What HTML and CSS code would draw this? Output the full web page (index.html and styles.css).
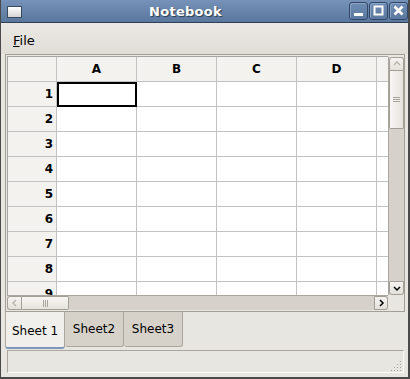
FILE: index.html
```html
<!DOCTYPE html>
<html>
<head>
<meta charset="utf-8">
<link rel="stylesheet" href="styles.css">
</head>
<body>
<div class="window">
  <div class="titlebar">
    <div class="winicon"></div>
    <div class="title">Notebook</div>
    <div class="tbtns">
      <div class="tbtn"><svg width="19" height="18" viewBox="0 0 19 18"><rect x="5" y="11" width="9" height="3" fill="#fff"/></svg></div>
      <div class="tbtn"><svg width="19" height="18" viewBox="0 0 19 18"><rect x="5.5" y="4.5" width="8" height="8" fill="none" stroke="#fff" stroke-width="2"/></svg></div>
      <div class="tbtn"><svg width="19" height="18" viewBox="0 0 19 18"><path d="M5.5 4.5 L13.5 12.5 M13.5 4.5 L5.5 12.5" stroke="#fff" stroke-width="2.6"/></svg></div>
    </div>
  </div>
  <div class="menubar"><span class="menuitem"><u>F</u>ile</span></div>
  <div class="frame">
    <div class="leftcol">
      <div class="viewport">
        <div class="grid">
          <div class="hd corner"></div><div class="hd col">A</div><div class="hd col">B</div><div class="hd col">C</div><div class="hd col">D</div><div class="hd col"></div>
          <div class="hd row">1</div><div class="cell sel"></div><div class="cell"></div><div class="cell"></div><div class="cell"></div><div class="cell"></div>
          <div class="hd row">2</div><div class="cell"></div><div class="cell"></div><div class="cell"></div><div class="cell"></div><div class="cell"></div>
          <div class="hd row">3</div><div class="cell"></div><div class="cell"></div><div class="cell"></div><div class="cell"></div><div class="cell"></div>
          <div class="hd row">4</div><div class="cell"></div><div class="cell"></div><div class="cell"></div><div class="cell"></div><div class="cell"></div>
          <div class="hd row">5</div><div class="cell"></div><div class="cell"></div><div class="cell"></div><div class="cell"></div><div class="cell"></div>
          <div class="hd row">6</div><div class="cell"></div><div class="cell"></div><div class="cell"></div><div class="cell"></div><div class="cell"></div>
          <div class="hd row">7</div><div class="cell"></div><div class="cell"></div><div class="cell"></div><div class="cell"></div><div class="cell"></div>
          <div class="hd row">8</div><div class="cell"></div><div class="cell"></div><div class="cell"></div><div class="cell"></div><div class="cell"></div>
          <div class="hd row">9</div><div class="cell"></div><div class="cell"></div><div class="cell"></div><div class="cell"></div><div class="cell"></div>
        </div>
      </div>
      <div class="hscroll">
        <div class="sbtn hleft"><svg width="8" height="8" viewBox="0 0 8 8"><path d="M5 1 L2 4 L5 7" fill="none" stroke="#b5b2ab" stroke-width="1.3"/></svg></div>
        <div class="hthumb"><span></span><span></span><span></span></div>
        <div class="htrough"></div>
        <div class="sbtn hright"><svg width="8" height="8" viewBox="0 0 8 8"><path d="M3 1 L6 4 L3 7" fill="none" stroke="#000" stroke-width="1.5"/></svg></div>
      </div>
    </div>
    <div class="rightcol">
      <div class="vscroll">
        <div class="sbtn vup"><svg width="8" height="8" viewBox="0 0 8 8"><path d="M1 5 L4 2 L7 5" fill="none" stroke="#b5b2ab" stroke-width="1.3"/></svg></div>
        <div class="vthumb"><span></span><span></span><span></span></div>
        <div class="vtrough"></div>
        <div class="sbtn vdown"><svg width="8" height="8" viewBox="0 0 8 8"><path d="M1 3 L4 6 L7 3" fill="none" stroke="#000" stroke-width="1.5"/></svg></div>
      </div>
      <div class="sbcorner"></div>
    </div>
  </div>
  <div class="tabs">
    <div class="tab active">Sheet 1</div>
    <div class="tab">Sheet2</div>
    <div class="tab">Sheet3</div>
  </div>
  <div class="statusbar">
    <svg class="grip" width="12" height="12" viewBox="0 0 12 12">
      <g fill="#a8a49c">
        <rect x="10" y="1" width="1" height="1"/>
        <rect x="7" y="4" width="1" height="1"/><rect x="10" y="4" width="1" height="1"/>
        <rect x="4" y="7" width="1" height="1"/><rect x="7" y="7" width="1" height="1"/><rect x="10" y="7" width="1" height="1"/>
        <rect x="1" y="10" width="1" height="1"/><rect x="4" y="10" width="1" height="1"/><rect x="7" y="10" width="1" height="1"/><rect x="10" y="10" width="1" height="1"/>
      </g>
    </svg>
  </div>
</div>
</body>
</html>
```

FILE: styles.css
```css
html, body {
  margin: 0;
  padding: 0;
  background: #e8e6e1;
}
.window {
  width: 410px;
  height: 379px;
  box-sizing: border-box;
  border-left: 1px solid #4a4a4a;
  border-right: 2px solid #4a4a4a;
  border-bottom: 2px solid #4a4a4a;
  background: #e8e6e1;
  display: flex;
  flex-direction: column;
  font-family: "DejaVu Sans", sans-serif;
  overflow: hidden;
}
.titlebar {
  height: 22px;
  border-bottom: 1px solid #2f3f56;
  background: linear-gradient(#7692b8, #5a779e);
  display: flex;
  align-items: center;
  flex: none;
}
.winicon {
  width: 13px;
  height: 10px;
  margin-left: 6px;
  margin-top: 1px;
  border: 1px solid #3a4a60;
  background: linear-gradient(#ffffff, #d4d4d4);
  flex: none;
}
.title {
  flex: 1;
  text-align: center;
  color: #fff;
  font-weight: bold;
  font-size: 13px;
  text-shadow: 1px 1px 1px #2a3a52;
  letter-spacing: 0.3px;
}
.tbtns {
  display: flex;
  gap: 1px;
  flex: none;
}
.tbtn {
  width: 19px;
  height: 18px;
  box-sizing: border-box;
  border: 1px solid #34476a;
  border-radius: 3px;
  background: linear-gradient(#6f8db4, #5b789f);
  box-shadow: inset 1px 1px 0 #8aa4c6;
  display: flex;
}
.tbtn svg { margin: -1px; }
.menubar {
  height: 31px;
  flex: none;
  background: linear-gradient(#ebe9e5, #e0ddd7);
  display: flex;
  align-items: center;
}
.menuitem {
  margin-left: 12px;
  margin-top: 3px;
  font-size: 13px;
  color: #000;
}
.frame {
  margin: 0 3px 0 4px;
  height: 258px;
  box-sizing: border-box;
  border: 1px solid #a29f98;
  padding: 1px 0 1px 1px;
  display: flex;
  flex: none;
  background: #e8e6e1;
}
.leftcol {
  width: 381px;
  display: flex;
  flex-direction: column;
}
.viewport {
  height: 239px;
  overflow: hidden;
  border-left: 1px solid #a5a5a5;
  border-top: 1px solid #a5a5a5;
  background: #fff;
}
.grid {
  display: grid;
  grid-template-columns: 49px 80px 80px 80px 80px 80px;
  grid-auto-rows: 25px;
}
.grid > div {
  box-sizing: border-box;
  border-right: 1px solid #c2c2c2;
  border-bottom: 1px solid #c2c2c2;
}
.hd {
  background: #f3f2ef;
  font-weight: bold;
  font-size: 12px;
  color: #000;
  display: flex;
  align-items: center;
}
.hd.col { justify-content: center; }
.hd.row { justify-content: flex-end; padding-right: 3px; }
.cell { background: #fff; }
.grid > .sel {
  border-right-color: #000;
  border-bottom-color: #000;
  box-shadow: inset 2px 2px 0 #000, inset -1px -1px 0 #000;
}
.hscroll {
  height: 15px;
  display: flex;
  background: #d6d2cb;
  border-top: 1px solid #aaa69f;
  box-sizing: border-box;
}
.sbtn {
  box-sizing: border-box;
  border: 1px solid #a49f96;
  background: linear-gradient(#f5f4f1, #e4e1db);
  display: flex;
  align-items: center;
  justify-content: center;
}
.hleft { width: 15px; border-radius: 3px 0 0 3px; }
.hright { width: 14px; border-radius: 0 3px 3px 0; }
.hthumb {
  width: 47px;
  box-sizing: border-box;
  border: 1px solid #a49f96;
  border-left: none;
  border-radius: 0 2px 2px 0;
  background: linear-gradient(#f7f6f3, #e6e3dd);
  display: flex;
  align-items: center;
  justify-content: center;
  gap: 1px;
}
.hthumb span { width: 1px; height: 7px; background: #a9a59d; }
.htrough { flex: 1; }
.rightcol {
  width: 16px;
  display: flex;
  flex-direction: column;
}
.vscroll {
  height: 238px;
  margin-top: 1px;
  display: flex;
  flex-direction: column;
  background: #d6d2cb;
  border-left: 1px solid #aaa69f;
  box-sizing: border-box;
}
.vup { height: 14px; border-radius: 3px 3px 0 0; }
.vdown { height: 14px; border-radius: 0 0 3px 3px; }
.vthumb {
  height: 58px;
  box-sizing: border-box;
  border: 1px solid #a49f96;
  border-top: none;
  border-radius: 0 0 2px 2px;
  background: linear-gradient(90deg, #f7f6f3, #e6e3dd);
  display: flex;
  flex-direction: column;
  align-items: center;
  justify-content: center;
  gap: 1px;
}
.vthumb span { width: 7px; height: 1px; background: #a9a59d; }
.vtrough { flex: 1; }
.sbcorner { flex: 1; background: #e8e6e1; }
.tabs {
  display: flex;
  margin-left: 4px;
  height: 37px;
  flex: none;
  align-items: flex-start;
}
.tab {
  box-sizing: border-box;
  height: 35px;
  padding: 0 5px;
  width: 59px;
  font-size: 12px;
  color: #000;
  display: flex;
  align-items: center;
  justify-content: center;
  background: #d6d2ca;
  border: 1px solid #aaa69e;
  border-top: none;
  border-left: none;
  border-radius: 0 0 3px 3px;
}
.tab.active {
  width: 60px;
  height: 37px;
  background: #f0efeb;
  border-left: 1px solid #aaa69e;
  border-bottom: 2px solid #7c97ba;
  padding-top: 3px;
}
.statusbar {
  margin: 1px 4px 0 6px;
  height: 23px;
  box-sizing: border-box;
  border-top: 1px solid #aaa69f;
  border-left: 1px solid #aaa69f;
  border-bottom: 1px solid #fbfbfa;
  border-right: 1px solid #fbfbfa;
  display: flex;
  justify-content: flex-end;
  align-items: flex-end;
  flex: none;
}
.grip { margin: 0 1px 0 0; }
```
